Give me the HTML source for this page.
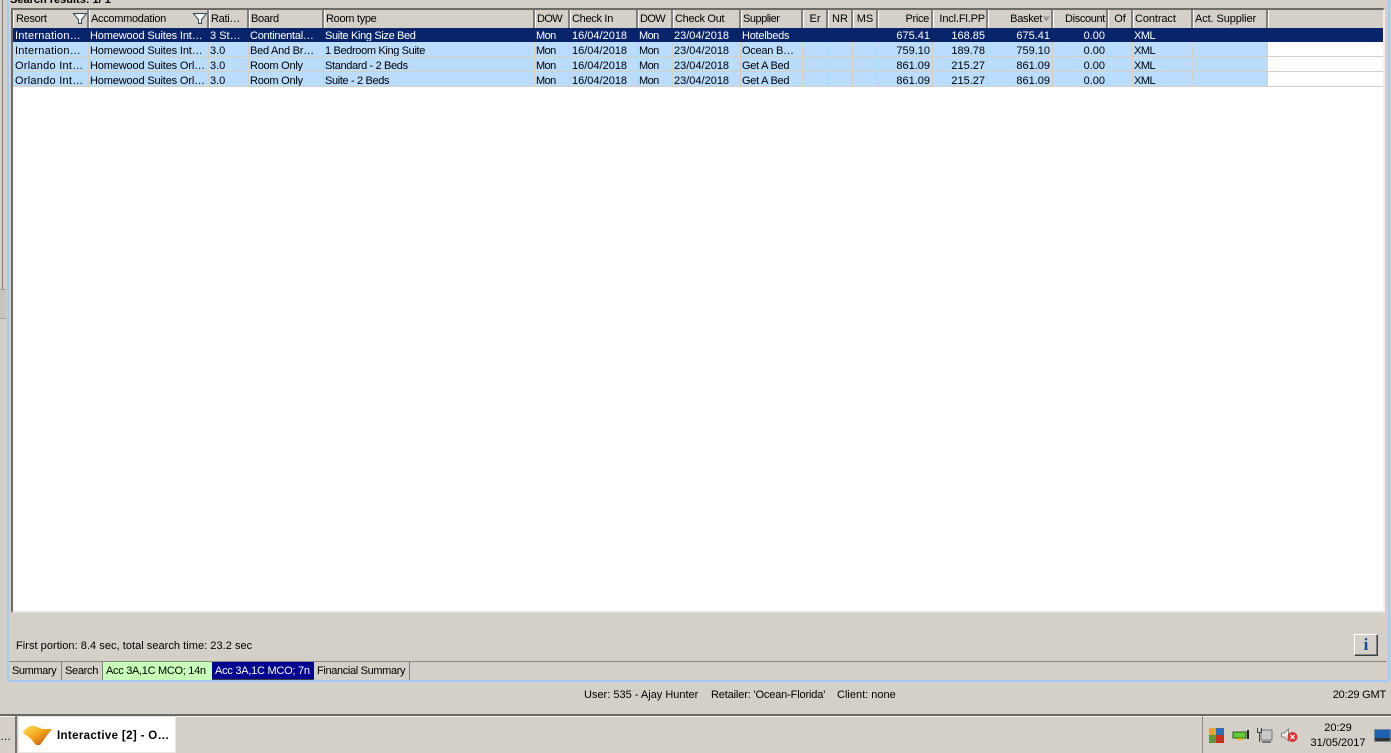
<!DOCTYPE html>
<html><head><meta charset="utf-8"><title>Interactive</title>
<style>
html,body{margin:0;padding:0;width:1391px;height:753px;overflow:hidden;background:#d4d0c8;font-family:"Liberation Sans",sans-serif;font-size:11px;color:#000}
.a{position:absolute}
.h{position:absolute;top:10px;height:18px;line-height:19px;box-sizing:border-box;background:#d4d0c8;border-right:2px solid #808080;border-left:1px solid #fff;padding-left:1px;white-space:nowrap;overflow:hidden;letter-spacing:-.3px}
.h.r{text-align:right;padding:0 1px 0 0}
.h.c{text-align:center;padding:0;letter-spacing:0}
table{position:absolute;left:13px;top:28px;border-collapse:separate;border-spacing:0;table-layout:fixed;width:1370px;font-size:11px}
td{height:9px;line-height:9px;padding:5px 0 0 1px;vertical-align:top;border-bottom:1px solid #d4d0c8;border-right:1px solid #d4d0c8;background:#b9dcff;white-space:nowrap;overflow:hidden;box-sizing:content-box}
td:nth-child(1){padding-left:2px;letter-spacing:.25px}
td:nth-child(2){letter-spacing:-.15px}
td:nth-child(4){letter-spacing:-.25px}
td:nth-child(5){letter-spacing:-.35px}
td:nth-child(6),td:nth-child(8){letter-spacing:-.6px}
td:nth-child(7){padding-left:2px}
td:nth-child(10){letter-spacing:-.25px}
td:nth-child(19){letter-spacing:-.5px}
td.n{text-align:right;padding:5px 2px 0 0}
td.w{background:#fff}
td:last-child{border-right:0}
tr.s td{background:#08246b;color:#fff;border-color:#08246b;padding-top:4px}
.t{position:absolute;top:662px;height:18px;line-height:19px;box-sizing:border-box;padding-left:3px;border-right:1px solid #808080;white-space:nowrap;overflow:hidden}
</style></head><body>

<div class="a" style="left:10px;top:-6px;font-weight:bold;line-height:12px;white-space:nowrap">Search results: 1/ 1</div>

<!-- outer frame -->
<div class="a" style="left:7px;top:0;width:1383px;height:682px;box-sizing:border-box;border-left:2px solid #a6caf0;border-right:2px solid #a6caf0;border-bottom:2px solid #a6caf0"></div>
<div class="a" style="left:2px;top:0;width:1px;height:290px;background:#808080"></div>
<div class="a" style="left:0;top:289px;width:6px;height:28px;border-top:1px solid #a0a0a0;border-bottom:1px solid #a0a0a0;background:#c8c4bc"></div>
<!-- grid frame -->
<div class="a" style="left:11px;top:8px;width:1374px;height:605px;box-sizing:border-box;background:#fff;border:solid;border-width:2px 2px 2px 2px;border-color:#6e6c68 #f0efec #e4e2dc #6e6c68"></div>

<!-- headers -->
<div class="h" style="left:13px;width:76px;padding-left:2px">Resort</div>
<div class="h" style="left:89px;width:120px">Accommodation</div>
<div class="h" style="left:209px;width:40px">Rati…</div>
<div class="h" style="left:249px;width:75px">Board</div>
<div class="h" style="left:324px;width:211px">Room type</div>
<div class="h" style="left:535px;width:35px;letter-spacing:-.6px">DOW</div>
<div class="h" style="left:570px;width:68px">Check In</div>
<div class="h" style="left:638px;width:35px;letter-spacing:-.6px">DOW</div>
<div class="h" style="left:673px;width:68px">Check Out</div>
<div class="h" style="left:741px;width:62px;letter-spacing:-.5px">Supplier</div>
<div class="h c" style="left:803px;width:25px">Er</div>
<div class="h c" style="left:828px;width:25px">NR</div>
<div class="h c" style="left:853px;width:25px">MS</div>
<div class="h r" style="left:878px;width:55px;padding-right:2px">Price</div>
<div class="h r" style="left:933px;width:55px;letter-spacing:-.15px">Incl.Fl.PP</div>
<div class="h r" style="left:988px;width:65px;padding-right:9px">Basket</div>
<div class="h r" style="left:1053px;width:55px;padding-right:1px;letter-spacing:-.35px">Discount</div>
<div class="h c" style="left:1108px;width:25px">Of</div>
<div class="h" style="left:1133px;width:60px;letter-spacing:-.1px">Contract</div>
<div class="h" style="left:1193px;width:75px;letter-spacing:-.1px">Act. Supplier</div>
<div class="h" style="left:1268px;width:115px;border-right:0"></div>

<svg class="a" style="left:72px;top:12px" width="16" height="13"><path d="M1.500 1.500H14.500L9.500 7.500V11.500H6.500V7.500Z" fill="#fff" stroke="#2f4a5c"/></svg>
<svg class="a" style="left:192px;top:12px" width="16" height="13"><path d="M1.500 1.500H14.500L9.500 7.500V11.500H6.500V7.500Z" fill="#fff" stroke="#2f4a5c"/></svg>
<svg class="a" style="left:1042px;top:16px" width="9" height="7"><path d="M0.500 0.500H8.500L4.500 5.500Z" fill="#9a9a9a"/></svg>

<table>
<colgroup><col style="width:76px"><col style="width:120px"><col style="width:40px"><col style="width:75px"><col style="width:211px"><col style="width:35px"><col style="width:68px"><col style="width:35px"><col style="width:68px"><col style="width:62px"><col style="width:25px"><col style="width:25px"><col style="width:25px"><col style="width:55px"><col style="width:55px"><col style="width:65px"><col style="width:55px"><col style="width:25px"><col style="width:60px"><col style="width:75px"><col style="width:115px"></colgroup>
<tr class="s"><td>Internation…</td><td>Homewood Suites Int…</td><td>3 St…</td><td>Continental…</td><td>Suite King Size Bed</td><td>Mon</td><td>16/04/2018</td><td>Mon</td><td>23/04/2018</td><td>Hotelbeds</td><td></td><td></td><td></td><td class="n">675.41</td><td class="n">168.85</td><td class="n">675.41</td><td class="n">0.00</td><td></td><td>XML</td><td></td><td></td></tr>
<tr><td>Internation…</td><td>Homewood Suites Int…</td><td>3.0</td><td>Bed And Br…</td><td>1 Bedroom King Suite</td><td>Mon</td><td>16/04/2018</td><td>Mon</td><td>23/04/2018</td><td>Ocean B…</td><td></td><td></td><td></td><td class="n">759.10</td><td class="n">189.78</td><td class="n">759.10</td><td class="n">0.00</td><td></td><td>XML</td><td></td><td class="w"></td></tr>
<tr><td>Orlando Int…</td><td>Homewood Suites Orl…</td><td>3.0</td><td>Room Only</td><td>Standard - 2 Beds</td><td>Mon</td><td>16/04/2018</td><td>Mon</td><td>23/04/2018</td><td>Get A Bed</td><td></td><td></td><td></td><td class="n">861.09</td><td class="n">215.27</td><td class="n">861.09</td><td class="n">0.00</td><td></td><td>XML</td><td></td><td class="w"></td></tr>
<tr><td>Orlando Int…</td><td>Homewood Suites Orl…</td><td>3.0</td><td>Room Only</td><td>Suite - 2 Beds</td><td>Mon</td><td>16/04/2018</td><td>Mon</td><td>23/04/2018</td><td>Get A Bed</td><td></td><td></td><td></td><td class="n">861.09</td><td class="n">215.27</td><td class="n">861.09</td><td class="n">0.00</td><td></td><td>XML</td><td></td><td class="w"></td></tr>
</table>

<div class="a" style="left:16px;top:639px;line-height:14px;white-space:nowrap;letter-spacing:.04px">First portion: 8.4 sec, total search time: 23.2 sec</div>

<!-- info button -->
<div class="a" style="left:1354px;top:634px;width:24px;height:22px;box-sizing:border-box;background:#d4d0c8;border:1px solid;border-color:#fff #404040 #404040 #fff;box-shadow:inset -1px -1px 0 #808080;text-align:center;font:bold 17px/20px 'Liberation Serif',serif;color:#0a4f9e">i</div>

<!-- tab bar -->
<div class="a" style="left:9px;top:661px;width:1378px;height:1px;background:#8a8884"></div>
<div class="t" style="left:9px;width:53px;letter-spacing:-.4px">Summary</div>
<div class="t" style="left:62px;width:41px;letter-spacing:-.3px">Search</div>
<div class="t" style="left:103px;width:109px;background:#c8ffb8;border-right:0;letter-spacing:-.3px">Acc 3A,1C MCO; 14n</div>
<div class="t" style="left:212px;width:102px;background:#000090;color:#fff;border-right:0;border-bottom:1px solid #404040;letter-spacing:-.25px">Acc 3A,1C MCO; 7n</div>
<div class="t" style="left:314px;width:96px;letter-spacing:-.35px">Financial Summary</div>

<!-- status bar -->
<div class="a" style="left:584px;top:688px;line-height:14px;white-space:nowrap">User: 535 - Ajay Hunter</div>
<div class="a" style="left:711px;top:688px;line-height:14px;white-space:nowrap;letter-spacing:-.15px">Retailer: 'Ocean-Florida'</div>
<div class="a" style="left:837px;top:688px;line-height:14px;white-space:nowrap">Client: none</div>
<div class="a" style="right:5px;top:688px;line-height:14px;letter-spacing:-.2px">20:29 GMT</div>

<!-- taskbar -->
<div class="a" style="left:0;top:714px;width:1391px;height:2px;background:#6b6a68"></div>
<div class="a" style="left:0;top:716px;width:1391px;height:1px;background:#f4f3f0"></div>
<div class="a" style="left:0;top:731px;line-height:12px;font-size:11px">…</div>
<div class="a" style="left:15px;top:716px;width:2px;height:37px;background:#777"></div>
<div class="a" style="left:18px;top:716px;width:158px;height:37px;box-sizing:border-box;background:#fff;border:1px solid #e8e6e0"></div>
<svg class="a" style="left:22px;top:724px" width="31" height="23">
<defs><linearGradient id="g" x1="0" y1="0" x2="1" y2="1"><stop offset="0" stop-color="#ffe060"/><stop offset=".45" stop-color="#f5a81c"/><stop offset="1" stop-color="#b8420f"/></linearGradient></defs>
<path d="M1 9C3 4 8 1 13 2L20 5H30L26 10L18 21H14L8 14Z" fill="url(#g)"/>
</svg>
<div class="a" style="left:57px;top:729px;font-weight:bold;font-size:11.5px;line-height:14px;white-space:nowrap;letter-spacing:.35px">Interactive [2] - O…</div>

<div class="a" style="left:1202px;top:716px;width:1px;height:37px;background:#888"></div>
<svg class="a" style="left:1208px;top:727px" width="18" height="17">
<rect x="1" y="1" width="7" height="7" fill="#f0a030"/><rect x="8" y="1" width="8" height="7" fill="#2f6db5"/>
<rect x="1" y="8" width="7" height="8" fill="#5c9a3c"/><rect x="8" y="8" width="8" height="8" fill="#c8301e"/>
</svg>
<svg class="a" style="left:1232px;top:730px" width="18" height="11">
<rect x="1" y="2" width="13" height="6" fill="#66cc33" stroke="#1f5f1f"/><rect x="15" y="0" width="2" height="9" fill="#222"/><rect x="5" y="8" width="6" height="2" fill="#d8b000"/>
</svg>
<svg class="a" style="left:1256px;top:727px" width="18" height="17">
<rect x="5" y="3" width="11" height="10" fill="#c8c8c8" stroke="#777"/><rect x="6" y="14" width="9" height="2" fill="#777"/>
<path d="M1.500 1V5.500H5.500V1M3.500 5.500V15" fill="none" stroke="#444"/>
</svg>
<svg class="a" style="left:1280px;top:727px" width="19" height="17">
<path d="M1.500 6H4.500L8.500 2V14L4.500 10H1.500Z" fill="#eee" stroke="#888"/>
<circle cx="12.500" cy="10" r="5" fill="#e03030"/><path d="M10.500 8L14.500 12M14.500 8L10.500 12" stroke="#fff" stroke-width="1.300"/>
</svg>
<div class="a" style="left:1310px;top:721px;width:56px;text-align:center;line-height:15px">20:29<br>31/05/2017</div>
<svg class="a" style="left:1374px;top:729px" width="17" height="14">
<rect x="0.500" y="0.500" width="16" height="12" fill="#1e60b0" stroke="#7a8a9a"/><rect x="1" y="9" width="15" height="3" fill="#333"/>
</svg>
</body></html>
